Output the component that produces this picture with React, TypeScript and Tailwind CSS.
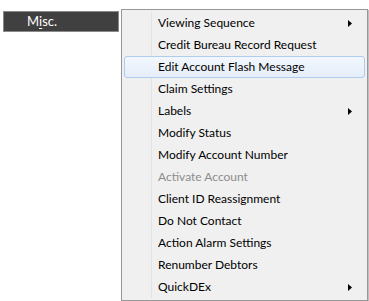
import React from "react";

type MenuItem = {
  label: string;
  submenu?: boolean;
  disabled?: boolean;
  active?: boolean;
};

const items: MenuItem[] = [
  { label: "Viewing Sequence", submenu: true },
  { label: "Credit Bureau Record Request" },
  { label: "Edit Account Flash Message", active: true },
  { label: "Claim Settings" },
  { label: "Labels", submenu: true },
  { label: "Modify Status" },
  { label: "Modify Account Number" },
  { label: "Activate Account", disabled: true },
  { label: "Client ID Reassignment" },
  { label: "Do Not Contact" },
  { label: "Action Alarm Settings" },
  { label: "Renumber Debtors" },
  { label: "QuickDEx", submenu: true },
];

const SubArrow = () => (
  <svg width="4" height="7" viewBox="0 0 4 7" className="absolute right-[12px] top-[7px]">
    <path d="M0 0 L4 3.5 L0 7 Z" fill="#000" />
  </svg>
);

export default function App() {
  return (
    <div
      className="relative h-[301px] w-[369px] bg-white"
      style={{ fontFamily: '"Segoe UI", Lato, "Noto Sans", sans-serif' }}
    >
      <div className="absolute left-[3px] top-[11px] flex h-[21px] w-[116px] items-center border border-[#8a8a8a] bg-[#404040] pl-[23px] text-[13px] text-white">
        M<span className="underline underline-offset-2">i</span>sc.
      </div>

      <div className="absolute left-[121px] top-[9px] w-[247px] border border-[#979797] bg-[#f0f0f0] p-[2px] shadow-[1px_1px_1px_rgba(0,0,0,0.25)]">
        <div className="absolute bottom-[2px] left-[29px] top-[2px] w-[2px] border-l border-[#e2e3e3] border-r-white" />
        {items.map((it) => (
          <div
            key={it.label}
            className={
              "relative flex h-[22px] items-center pl-[33px] text-[12px] " +
              (it.disabled ? "text-[#8d8d8d] " : "text-black ") +
              (it.active
                ? "rounded-[3px] border border-[#aeccee] bg-[linear-gradient(#f2f7fd,#e5eef9)]"
                : "border border-transparent")
            }
          >
            {it.label}
            {it.submenu && <SubArrow />}
          </div>
        ))}
      </div>
    </div>
  );
}
